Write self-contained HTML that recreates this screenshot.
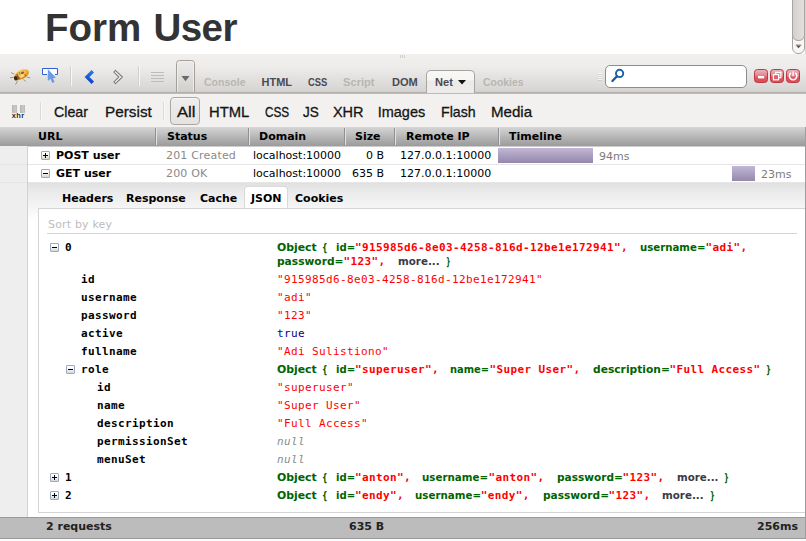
<!DOCTYPE html>
<html><head><meta charset="utf-8"><title>Form User</title>
<style>
*{box-sizing:border-box;margin:0;padding:0}
html,body{width:806px;height:541px;overflow:hidden;background:#fff}
body{position:relative;font-family:"DejaVu Sans","Liberation Sans",sans-serif;font-size:11px;color:#000}
.abs,.w,.hc,.tab,.mono,.o,.st,i.tw,i.hs{position:absolute}
h1{position:absolute;left:45px;top:6px;font-family:"Liberation Sans",sans-serif;font-weight:bold;font-size:38.5px;line-height:44px;color:#333;white-space:nowrap;letter-spacing:0;word-spacing:1.5px}
h1 span{letter-spacing:-0.55px}
#tb1{left:0;top:54px;width:806px;height:40px;background:linear-gradient(#f0efee 0,#eeedec 12px,#d7d5d3 37px,#cfcdca 38px,#b3b0ac 38px,#b3b0ac 39px,#bebcb8 39px,#bebcb8 40px)}
#tb2{left:0;top:94px;width:806px;height:33px;background:#f2f1f0}
.w{font-family:"Liberation Sans",sans-serif;white-space:nowrap;transform-origin:0 50%}
.t1{font-size:11px;font-weight:bold;top:75px;line-height:14px;color:#4b4a52}
.t1.dis{color:#b9b6b2}
.t2{font-size:14.5px;top:102px;line-height:20px;color:#151515;-webkit-text-stroke:0.3px #151515}
#hdr{left:0;top:127px;width:806px;height:20px;background:linear-gradient(#d5d5d5 0%,#c3c3c3 30%,#a9a9a9 70%,#9c9c9c 95%,#cdcdcd 95%,#cdcdcd 100%)}
.hc{top:128px;height:18px;line-height:18px;font-weight:bold;font-size:11px;white-space:nowrap}
i.hs{top:128px;height:17px;width:2px;border-left:1px solid #8f8f8f;border-right:1px solid #e3e3e3}
#gut{left:0;top:146px;width:28px;height:371px;background:#eeeeee;border-right:1px solid #d2d2d2}
.row{position:absolute;left:28px;width:777px;height:19px;line-height:18px;white-space:nowrap;border-bottom:1px solid #e6e6e6}
.row span{position:absolute;top:1px}
.gry{color:#8a8a8a}
i.tw{width:9px;height:9px;border:1px solid #95a9c9;border-radius:1px;background:linear-gradient(#ffffff 20%,#dcd8cf)}
i.tw:before{content:"";position:absolute;left:1px;top:3px;width:5px;height:1px;background:#000}
i.tw.p:after{content:"";position:absolute;left:3px;top:1px;width:1px;height:5px;background:#000}
.bar{position:absolute;height:15px;background:linear-gradient(#c2b7d6,#9588ab)}
#tabs{left:28px;top:183px;width:777px;height:38px;background:linear-gradient(#e0e0e0 0,#eaeaea 8px,#f3f3f3 22px,#ffffff 38px)}
.tab{top:189px;height:21px;line-height:20px;font-weight:bold;font-size:11px;white-space:nowrap;color:#000}
#seltab{left:244px;top:186px;width:44px;height:23px;background:#fff;border:1px solid #d9d9d9;border-bottom:none;border-radius:4px 4px 0 0}
#json{left:38px;top:208px;width:767px;height:305px;background:#fff;border:1px solid #d4d4d4;border-right:none}
.mono{font-family:"DejaVu Sans Mono","Liberation Mono",monospace;font-size:11px;white-space:nowrap;line-height:18px;letter-spacing:0.378px}
.k{font-weight:bold;color:#000}
.s{color:#ff0000}
.o{font-family:"DejaVu Sans","Liberation Sans",sans-serif;font-weight:bold;color:#006400;font-size:11px;white-space:nowrap;line-height:18px;transform-origin:0 50%}
.o.m{font-family:"DejaVu Sans Mono","Liberation Mono",monospace;color:#ff0000;letter-spacing:0.378px}
.o.more{color:#3a3a48}
.n{color:#000088}
.nu{color:#8a8a8a;font-style:italic}
#status{left:0;top:517px;width:806px;height:22px;background:#bcbcbc;border-top:1px solid #9a9a9a;border-bottom:1px solid #9a9a9a}
.st{top:517px;line-height:20px;font-weight:bold;font-size:11px;color:#222;white-space:nowrap}
#bot{left:0;top:539px;width:806px;height:2px;background:#fbfbfb}
#redge{left:805px;top:127px;width:1px;height:412px;background:#9d9d9d}
</style></head><body>
<h1>Form <span>User</span></h1>
<div class="abs" style="left:805px;top:0;width:1px;height:54px;background:#d9d6d3"></div>
<div class="abs" style="left:792px;top:-10px;width:13px;height:64px;background:#f8f7f6;border:1px solid #a9a49e;border-radius:6px;overflow:hidden"><div style="position:absolute;left:-1px;top:0;width:13px;height:50px;background:linear-gradient(90deg,#d3d0cd,#e3e1df);border:1px solid #a9a49e;border-radius:0 0 6px 6px"></div></div>
<svg class="abs" style="left:795px;top:44px" width="7" height="5" viewBox="0 0 7 5"><path d="M0.700 1h5.600" stroke="#777" stroke-width="0.800"/><path d="M1 1.600h5l-2.500 2.600z" fill="#555"/></svg>
<div id="tb1" class="abs"></div>
<div id="tb2" class="abs"></div>
<svg class="abs" style="left:0;top:54px" width="806" height="40" viewBox="0 54 806 40">
<defs>
<linearGradient id="gb" x1="0" y1="0" x2="0" y2="1"><stop offset="0" stop-color="#1f7af0"/><stop offset="1" stop-color="#1540c4"/></linearGradient>
<linearGradient id="gr" x1="0" y1="0" x2="0" y2="1"><stop offset="0" stop-color="#ecb8be"/><stop offset="0.5" stop-color="#e37f8c"/><stop offset="0.56" stop-color="#df5a6b"/><stop offset="0.9" stop-color="#de4a54"/><stop offset="1" stop-color="#e05a40"/></linearGradient>
<linearGradient id="gd" x1="0" y1="0" x2="0" y2="1"><stop offset="0" stop-color="#ecebea"/><stop offset="0.4" stop-color="#e2e1e0"/><stop offset="1" stop-color="#d0cfcd"/></linearGradient>
<radialGradient id="bug" cx="0.55" cy="0.35" r="0.7"><stop offset="0" stop-color="#fde9a0"/><stop offset="0.45" stop-color="#f2b23a"/><stop offset="1" stop-color="#c8741c"/></radialGradient>
</defs>
<!-- grip top -->
<g fill="#d2d0cd"><rect x="400" y="55" width="1" height="3"/><rect x="402" y="55" width="1" height="3"/><rect x="404" y="55" width="1" height="3"/></g>
<!-- firebug -->
<g stroke="#8f8c88" stroke-width="0.9" fill="none" stroke-linecap="round">
<path d="M14 74l-2.600-1.200M13.800 77.300l-3.400.400M17.800 80.300l-2 4M23.500 79.600l1.800 1.400M26.800 77l3 .800"/>
</g>
<g transform="rotate(-27 21 75)">
<ellipse cx="21.300" cy="75" rx="8.800" ry="5.200" fill="#f6e28c" opacity=".55"/>
<ellipse cx="21.500" cy="75" rx="8" ry="4.300" fill="url(#bug)"/>
<ellipse cx="14.900" cy="75.600" rx="1.900" ry="2.200" fill="#3c2616"/>
<path d="M17.600 72.300v5.600" stroke="#6e3c18" stroke-width="1.300" opacity=".8"/>
<path d="M20.600 71.600v2.800M24.800 76v2" stroke="#8a4a1a" stroke-width="1.200" opacity=".6"/>
<ellipse cx="23.400" cy="73.700" rx="1.800" ry="1.100" fill="#6a3418" opacity=".75"/>
<ellipse cx="21.500" cy="76.600" rx="2.400" ry="1" fill="#fff3b8" opacity=".7"/>
</g>
<!-- inspect -->
<path d="M42.5 74.5v-6h15v6M42.5 74.5h4.5M55 74.5h2.500" stroke="#2f62d0" stroke-width="1" fill="#fff"/>
<rect x="43" y="69" width="14" height="5" fill="#fdfdfd"/>
<path d="M48.2 69.8v10.6l2.3-2.1 2 4.2 1.7-.8-1.9-4 3-.2z" fill="#6c9be8" stroke="#4f86e0" stroke-width="0.5"/>
<!-- separators -->
<rect x="70" y="66" width="1" height="20" fill="#d3d1ce"/><rect x="71" y="66" width="1" height="20" fill="#f7f7f6"/>
<rect x="138" y="66" width="1" height="20" fill="#d3d1ce"/><rect x="139" y="66" width="1" height="20" fill="#f7f7f6"/>
<!-- back / forward -->
<path d="M92.8 71.2L87 77l5.800 5.800" stroke="url(#gb)" stroke-width="3.400" fill="none"/>
<path d="M115.400 70.400l-1.500 1.800 5 4.800-5 4.800 1.500 1.800 7-6.600z" fill="#f4f4f4" stroke="#7e7e7e" stroke-width="1.100" stroke-linejoin="round"/>
<!-- lines -->
<g fill="#bdbcbb"><rect x="151" y="72" width="13" height="1"/><rect x="151" y="75" width="13" height="1"/><rect x="151" y="78" width="13" height="1"/><rect x="151" y="81" width="13" height="1"/></g>
<!-- dropdown -->
<path d="M176.500 92V63.500q0-3 3-3h12q3 0 3 3V92" fill="url(#gd)" stroke="#a49f99" stroke-width="1"/>
<path d="M177.500 91.500V64q0-2.500 2.500-2.500h11q2.500 0 2.500 2.500V91.500" fill="none" stroke="#f3f2f1" stroke-width="1" opacity=".8"/>
<path d="M181.500 76h8l-4 5.200z" fill="#6a6a6a"/>
<!-- search grip -->
<g fill="#fbfbfa"><rect x="598" y="73" width="4" height="1"/><rect x="598" y="75" width="4" height="1"/><rect x="598" y="77" width="4" height="1"/><rect x="598" y="79" width="4" height="1"/></g>
<g fill="#cfcdca"><rect x="598" y="74" width="4" height="1"/><rect x="598" y="76" width="4" height="1"/><rect x="598" y="78" width="4" height="1"/><rect x="598" y="80" width="4" height="1"/></g>
<!-- search box -->
<rect x="605.500" y="65.500" width="141" height="22" rx="4.500" fill="#fff" stroke="#8c8c96"/>
<circle cx="619.600" cy="73.400" r="3.600" fill="#fff" stroke="#2263a3" stroke-width="2"/>
<path d="M617 76.200l-4.600 4.800" stroke="#1f5a98" stroke-width="2.300" stroke-linecap="round"/>
<!-- red buttons -->
<g stroke="#b93a42" stroke-width="1" fill="url(#gr)">
<rect x="754.500" y="69.500" width="13" height="13" rx="3"/><rect x="770.500" y="69.500" width="13" height="13" rx="3"/><rect x="786.500" y="69.500" width="13" height="13" rx="3"/>
</g>
<rect x="758" y="76" width="6.200" height="2.400" fill="#fff"/>
<g fill="none" stroke="#fff" stroke-width="1.200"><rect x="775.700" y="72.400" width="5.200" height="5.200"/><rect x="773.400" y="74.600" width="5.200" height="5.200" fill="#df6272"/></g>
<path d="M791 72.900a3.700 3.700 0 1 0 4.200 0" fill="none" stroke="#fff" stroke-width="1.500"/><path d="M793.100 71.600v4.600" stroke="#fff" stroke-width="1.400"/>
</svg>

<span class="w t1 dis" style="left:203.5px;transform:scaleX(0.956)">Console</span>
<span class="w t1" style="left:261.5px;transform:scaleX(1.000)">HTML</span>
<span class="w t1" style="left:307.7px;transform:scaleX(0.854)">CSS</span>
<span class="w t1 dis" style="left:343.2px;transform:scaleX(1.013)">Script</span>
<span class="w t1" style="left:391.5px;transform:scaleX(1.004)">DOM</span>
<div class="abs" style="left:426px;top:70px;width:49px;height:23px;background:linear-gradient(#f8f8f7 0,#f5f5f4 9px,#ebeae9 10px,#edeceb 23px);border:1px solid #a8a5a1;border-bottom:none;border-radius:5px 5px 0 0"></div>
<svg class="abs" style="left:458px;top:80px" width="8" height="5" viewBox="0 0 8 5"><path d="M0 0h8l-4 4.5z" fill="#111"/></svg>
<span class="w t1" style="left:434.5px;transform:scaleX(1.006)">Net</span>
<span class="w t1 dis" style="left:483.4px;transform:scaleX(0.949)">Cookies</span>
<div class="abs" style="left:12px;top:105px;width:5px;height:8px;background:linear-gradient(90deg,#b4b4b4,#c9c9c9 60%,#b9b9b9)"></div>
<div class="abs" style="left:20px;top:105px;width:5px;height:8px;background:linear-gradient(90deg,#b4b4b4,#c9c9c9 60%,#b9b9b9)"></div>
<span class="abs" style="left:11.800px;top:110px;font-family:'Liberation Sans',sans-serif;font-size:7.500px;font-weight:bold;line-height:11px;color:#222;text-shadow:0 0 1px #fff,0 0 1px #fff,0 0 1px #fff;letter-spacing:0.300px">xhr</span>
<div class="abs" style="left:40px;top:102px;width:1px;height:18px;background:#dcdad7"></div>
<div class="abs" style="left:41px;top:102px;width:1px;height:18px;background:#f9f9f8"></div>
<div class="abs" style="left:163px;top:102px;width:1px;height:18px;background:#dcdad7"></div>
<div class="abs" style="left:164px;top:102px;width:1px;height:18px;background:#f9f9f8"></div>

<div class="abs" style="left:170px;top:97px;width:30px;height:28px;border:1px solid #aaa7a3;border-radius:4px;background:linear-gradient(#efeeed,#e4e3e1);box-shadow:inset 0 1px 0 #f8f8f7"></div>
<span class="w t2" style="left:54.4px;transform:scaleX(0.980)">Clear</span>
<span class="w t2" style="left:104.5px;transform:scaleX(1.056)">Persist</span>
<span class="w t2" style="left:177.1px;transform:scaleX(1.149)">All</span>
<span class="w t2" style="left:209.4px;transform:scaleX(1.020)">HTML</span>
<span class="w t2" style="left:264.5px;transform:scaleX(0.812)">CSS</span>
<span class="w t2" style="left:303.2px;transform:scaleX(0.935)">JS</span>
<span class="w t2" style="left:332.9px;transform:scaleX(1.000)">XHR</span>
<span class="w t2" style="left:377.7px;transform:scaleX(1.000)">Images</span>
<span class="w t2" style="left:440.5px;transform:scaleX(0.977)">Flash</span>
<span class="w t2" style="left:490.5px;transform:scaleX(1.041)">Media</span>
<div id="hdr" class="abs"></div>
<span class="hc" style="left:38px">URL</span>
<span class="hc" style="left:167px">Status</span>
<span class="hc" style="left:259px">Domain</span>
<span class="hc" style="left:355px">Size</span>
<span class="hc" style="left:406px">Remote IP</span>
<span class="hc" style="left:509px">Timeline</span>
<i class="hs" style="left:155px"></i><i class="hs" style="left:248px"></i><i class="hs" style="left:344px"></i><i class="hs" style="left:394px"></i><i class="hs" style="left:498px"></i>
<div id="gut" class="abs"></div><div class="abs" style="left:0;top:164px;width:27px;height:1px;background:#e4e4e4"></div><div class="abs" style="left:0;top:182px;width:27px;height:1px;background:#e4e4e4"></div>
<div class="row" style="top:146px"><i class="tw p" style="left:13px;top:5px"></i><span style="left:28px;font-weight:bold">POST user</span><span class="gry" style="left:138px;letter-spacing:0.18px">201 Created</span><span style="left:225px">localhost:10000</span><span style="left:338px">0 B</span><span style="left:372px">127.0.0.1:10000</span><span class="gry" style="left:571px;top:2px;color:#7c7c7c">94ms</span></div>
<div class="row" style="top:164px"><i class="tw" style="left:13px;top:5px"></i><span style="left:28px;font-weight:bold">GET user</span><span class="gry" style="left:138px;letter-spacing:0.18px">200 OK</span><span style="left:225px">localhost:10000</span><span style="left:324px">635 B</span><span style="left:372px">127.0.0.1:10000</span><span class="gry" style="left:733px;top:2px;color:#7c7c7c">23ms</span></div>
<div class="bar" style="left:498px;top:148px;width:95px"></div>
<div class="bar" style="left:732px;top:166px;width:23px"></div>
<div id="tabs" class="abs"></div><div id="seltab" class="abs"></div>
<span class="tab" style="left:62px">Headers</span>
<span class="tab" style="left:126px">Response</span>
<span class="tab" style="left:200px">Cache</span>
<span class="tab" style="left:251px">JSON</span>
<span class="tab" style="left:295px">Cookies</span>
<div id="json" class="abs"></div>
<span class="abs" style="left:48px;top:216px;line-height:18px;color:#bdbdbd;font-size:11px;letter-spacing:0.17px">Sort by key</span>
<div class="abs" style="left:47px;top:233px;width:750px;height:1px;background:#d4d4d4"></div>
<i class="tw" style="left:50px;top:243px"></i>
<span class="mono k" style="left:65px;top:239px">0</span>
<span class="o " style="left:277.4px;top:239px;transform:scaleX(0.988)">Object</span>
<span class="o " style="left:321.5px;top:239px;transform:scaleX(0.705)">{</span>
<span class="o " style="left:336.4px;top:239px;transform:scaleX(0.919)">id=</span>
<span class="o m" style="left:354.9px;top:239px">"915985d6-8e03-4258-816d-12be1e172941",</span>
<span class="o " style="left:640.0px;top:239px;transform:scaleX(0.926)">username=</span>
<span class="o m" style="left:705.5px;top:239px">"adi",</span>
<span class="o " style="left:277.4px;top:253px;transform:scaleX(0.968)">password=</span>
<span class="o m" style="left:343.5px;top:253px">"123",</span>
<span class="o more" style="left:397.6px;top:253px;transform:scaleX(0.937)">more...</span>
<span class="o " style="left:445.6px;top:253px;transform:scaleX(0.590)">}</span>
<span class="mono k" style="left:81px;top:271px">id</span>
<span class="mono s" style="left:277px;top:271px">"915985d6-8e03-4258-816d-12be1e172941"</span>
<span class="mono k" style="left:81px;top:289px">username</span>
<span class="mono s" style="left:277px;top:289px">"adi"</span>
<span class="mono k" style="left:81px;top:307px">password</span>
<span class="mono s" style="left:277px;top:307px">"123"</span>
<span class="mono k" style="left:81px;top:325px">active</span>
<span class="mono n" style="left:277px;top:325px">true</span>
<span class="mono k" style="left:81px;top:343px">fullname</span>
<span class="mono s" style="left:277px;top:343px">"Adi Sulistiono"</span>
<i class="tw" style="left:66px;top:365px"></i>
<span class="mono k" style="left:81px;top:361px">role</span>
<span class="o " style="left:277.4px;top:361px;transform:scaleX(0.988)">Object</span>
<span class="o " style="left:321.5px;top:361px;transform:scaleX(0.705)">{</span>
<span class="o " style="left:336.4px;top:361px;transform:scaleX(0.919)">id=</span>
<span class="o m" style="left:354.9px;top:361px">"superuser",</span>
<span class="o " style="left:450.4px;top:361px;transform:scaleX(0.901)">name=</span>
<span class="o m" style="left:489.5px;top:361px">"Super User",</span>
<span class="o " style="left:592.6px;top:361px;transform:scaleX(0.972)">description=</span>
<span class="o m" style="left:669.5px;top:361px">"Full Access"</span>
<span class="o " style="left:766.2px;top:361px;transform:scaleX(0.641)">}</span>
<span class="mono k" style="left:97px;top:379px">id</span>
<span class="mono s" style="left:277px;top:379px">"superuser"</span>
<span class="mono k" style="left:97px;top:397px">name</span>
<span class="mono s" style="left:277px;top:397px">"Super User"</span>
<span class="mono k" style="left:97px;top:415px">description</span>
<span class="mono s" style="left:277px;top:415px">"Full Access"</span>
<span class="mono k" style="left:97px;top:433px">permissionSet</span>
<span class="mono nu" style="left:277px;top:433px">null</span>
<span class="mono k" style="left:97px;top:451px">menuSet</span>
<span class="mono nu" style="left:277px;top:451px">null</span>
<i class="tw p" style="left:50px;top:473px"></i>
<span class="mono k" style="left:65px;top:469px">1</span>
<span class="o " style="left:277.4px;top:469px;transform:scaleX(0.988)">Object</span>
<span class="o " style="left:321.5px;top:469px;transform:scaleX(0.705)">{</span>
<span class="o " style="left:336.4px;top:469px;transform:scaleX(0.919)">id=</span>
<span class="o m" style="left:354.9px;top:469px">"anton",</span>
<span class="o " style="left:422.4px;top:469px;transform:scaleX(0.935)">username=</span>
<span class="o m" style="left:488.5px;top:469px">"anton",</span>
<span class="o " style="left:556.8px;top:469px;transform:scaleX(0.959)">password=</span>
<span class="o m" style="left:622.5px;top:469px">"123",</span>
<span class="o more" style="left:676.7px;top:469px;transform:scaleX(0.932)">more...</span>
<span class="o " style="left:724.1px;top:469px;transform:scaleX(0.628)">}</span>
<i class="tw p" style="left:50px;top:491px"></i>
<span class="mono k" style="left:65px;top:487px">2</span>
<span class="o " style="left:277.4px;top:487px;transform:scaleX(0.988)">Object</span>
<span class="o " style="left:321.5px;top:487px;transform:scaleX(0.705)">{</span>
<span class="o " style="left:336.4px;top:487px;transform:scaleX(0.919)">id=</span>
<span class="o m" style="left:354.9px;top:487px">"endy",</span>
<span class="o " style="left:414.7px;top:487px;transform:scaleX(0.934)">username=</span>
<span class="o m" style="left:480.7px;top:487px">"endy",</span>
<span class="o " style="left:542.5px;top:487px;transform:scaleX(0.962)">password=</span>
<span class="o m" style="left:608.5px;top:487px">"123",</span>
<span class="o more" style="left:662.4px;top:487px;transform:scaleX(0.937)">more...</span>
<span class="o " style="left:709.8px;top:487px;transform:scaleX(0.615)">}</span>
<div id="status" class="abs"></div>
<span class="st" style="left:46px">2 requests</span><span class="st" style="left:349px">635 B</span><span class="st" style="left:757px">256ms</span>
<div id="bot" class="abs"></div><div id="redge" class="abs"></div>
</body></html>
